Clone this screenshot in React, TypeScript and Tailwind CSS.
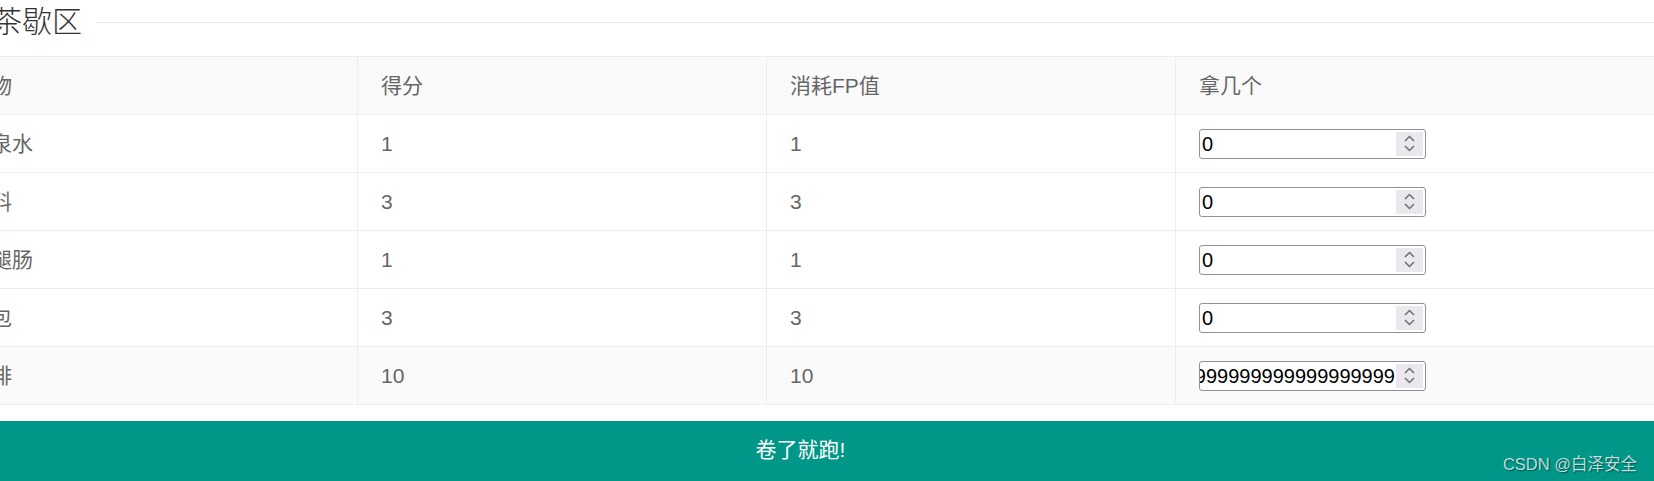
import React from "react";

type Item = { name: string; score: number; fp: number; qty: string; hover?: boolean };

const items: Item[] = [
  { name: "矿泉水", score: 1, fp: 1, qty: "0" },
  { name: "饮料", score: 3, fp: 3, qty: "0" },
  { name: "火腿肠", score: 1, fp: 1, qty: "0" },
  { name: "面包", score: 3, fp: 3, qty: "0" },
  { name: "咖啡", score: 10, fp: 10, qty: "99999999999999999999", hover: true },
];

const font = { fontFamily: "'Liberation Sans', 'Noto Sans CJK SC', sans-serif" };

function Spinner() {
  return (
    <div className="w-[27px] self-stretch my-[2px] mr-[2px] bg-[#e9e9ed] flex flex-col items-center justify-center gap-[3px] shrink-0">
      <svg width="11" height="7" viewBox="0 0 11 7" fill="none">
        <path d="M1 6 L5.5 1.5 L10 6" stroke="#6d6d75" strokeWidth="1.5" />
      </svg>
      <svg width="11" height="7" viewBox="0 0 11 7" fill="none">
        <path d="M1 1 L5.5 5.5 L10 1" stroke="#6d6d75" strokeWidth="1.5" />
      </svg>
    </div>
  );
}

function NumberBox({ value }: { value: string }) {
  const long = value.length > 10;
  return (
    <div className="w-[227px] h-[30px] border border-[#8f8f9d] rounded-[3px] bg-white flex items-stretch overflow-hidden">
      <div
        className={`flex-1 min-w-0 overflow-hidden whitespace-nowrap flex items-center text-[20px] text-black ${
          long ? "justify-end pr-[1px]" : "justify-start pl-[2px]"
        }`}
        style={font}
      >
        {value}
      </div>
      <Spinner />
    </div>
  );
}

export default function App() {
  return (
    <div className="w-[1654px] h-[481px] overflow-hidden bg-white relative" style={font}>
      <div className="ml-[-53px] w-[1707px]">
        <div className="h-[44px] flex items-center">
          <div className="w-[30px] border-t border-[#e6e6e6]" />
          <span className="px-[15px] text-[30px] font-light text-[#333] leading-none">茶歇区</span>
          <div className="flex-1 border-t border-[#e6e6e6]" />
        </div>

        <div className="mt-[12px] border-t border-[#eeeeee] text-[21px] text-[#666]">
          <div className="grid grid-cols-[411px_409px_409px_1fr] h-[58px] bg-[#fafafa] border-b border-[#eeeeee]">
            <div className="pl-[23px] flex items-center border-r border-[#eeeeee]">食物</div>
            <div className="pl-[23px] flex items-center border-r border-[#eeeeee]">得分</div>
            <div className="pl-[23px] flex items-center border-r border-[#eeeeee]">消耗FP值</div>
            <div className="pl-[23px] flex items-center">拿几个</div>
          </div>
          {items.map((it) => (
            <div
              key={it.name}
              className={`grid grid-cols-[411px_409px_409px_1fr] h-[58px] border-b border-[#eeeeee] ${
                it.hover ? "bg-[#fafafa]" : "bg-white"
              }`}
            >
              <div className="pl-[23px] flex items-center border-r border-[#eeeeee]">{it.name}</div>
              <div className="pl-[23px] flex items-center border-r border-[#eeeeee]">{it.score}</div>
              <div className="pl-[23px] flex items-center border-r border-[#eeeeee]">{it.fp}</div>
              <div className="pl-[23px] flex items-center">
                <NumberBox value={it.qty} />
              </div>
            </div>
          ))}
        </div>

        <div className="mt-[16px] h-[61px] pb-[3px] bg-[#009688] flex items-center justify-center text-white text-[21px]">
          卷了就跑!
        </div>
      </div>

      <div
        className="absolute right-[17px] bottom-[9px] text-[16.5px] leading-none text-white/75 [text-shadow:1px_1px_1px_rgba(0,0,0,0.45)]"
        style={font}
      >
        CSDN @白泽安全
      </div>
    </div>
  );
}
